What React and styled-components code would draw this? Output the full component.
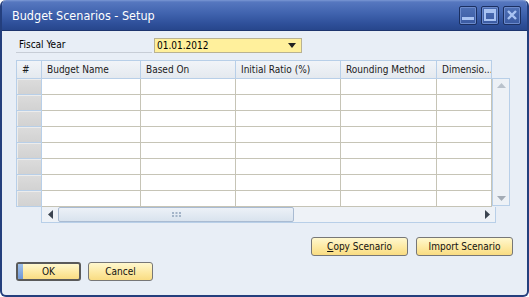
import React from "react";
import styled, { createGlobalStyle } from "styled-components";

const Global = createGlobalStyle`
  html, body { margin: 0; padding: 0; background: #ffffff; }
  body { font-family: "DejaVu Sans Condensed", "DejaVu Sans", sans-serif; }
`;

const FONT = `"DejaVu Sans Condensed", "DejaVu Sans", sans-serif`;

const Window = styled.div`
  box-sizing: border-box;
  width: 529px;
  height: 297px;
  display: flex;
  flex-direction: column;
  background: #e8eef6;
  border: 2px solid #243f7d;
  border-top: none;
  border-radius: 6px;
  overflow: hidden;
`;

const TitleBar = styled.div`
  height: 30px;
  flex: none;
  display: flex;
  align-items: center;
  justify-content: space-between;
  padding: 0 8px 0 12px;
  margin: 0 -2px;
  background: linear-gradient(#7a97d4 0px, #5677bf 2px, #3f62ad 14px, #2e4f99 24px, #27468c 30px);
  border-bottom: 1px solid #1d356e;
`;

const Title = styled.span`
  color: #ffffff;
  font-family: ${FONT};
  font-size: 12.5px;
  margin-top: 1px;
`;

const Controls = styled.div`
  display: flex;
  gap: 4px;
`;

const CtrlBtn = styled.div`
  box-sizing: border-box;
  width: 18px;
  height: 19px;
  border: 1px solid #1b2f60;
  border-radius: 2px;
  background: linear-gradient(#4e70b6, #3a5aa2);
  box-shadow: inset 0 0 0 1px #6c8acb;
  display: flex;
  align-items: center;
  justify-content: center;
`;

const Body = styled.div`
  flex: 1;
  display: flex;
  flex-direction: column;
  padding: 7px 14px 0 14px;
  font-family: ${FONT};
  font-size: 10px;
  color: #000;
`;

const FieldRow = styled.div`
  display: flex;
  align-items: center;
  height: 15px;
`;

const Label = styled.div`
  width: 136px;
  height: 15px;
  box-sizing: border-box;
  padding-left: 3px;
  border-bottom: 1px solid #c7cdd6;
  line-height: 14px;
  margin-right: 2px;
`;

const Select = styled.div`
  box-sizing: border-box;
  width: 148px;
  height: 15px;
  background: #fff09c;
  border: 1px solid #b9b292;
  display: flex;
  align-items: center;
  justify-content: space-between;
  padding: 0 5px 0 2px;
`;

const GridWrap = styled.div`
  margin-top: 7px;
  display: flex;
  flex-direction: column;
  width: 498px;
`;

const GridTop = styled.div`
  display: flex;
  align-items: flex-start;
`;

const Table = styled.div`
  display: grid;
  grid-template-columns: 25px 99px 95px 105px 96px 55px;
  border-left: 1px solid #b8cfe8;
  border-top: 1px solid #b8cfe8;
`;

const HeadCell = styled.div`
  box-sizing: border-box;
  height: 18px;
  background: linear-gradient(#f1f4f8, #e4e9ef);
  border-right: 1px solid #b8cfe8;
  border-bottom: 1px solid #b8cfe8;
  padding-left: 5px;
  line-height: 17px;
  white-space: nowrap;
  overflow: hidden;
  color: #1a1a1a;
`;

const RowHead = styled.div`
  box-sizing: border-box;
  height: 16px;
  background: linear-gradient(#dcdcdc, #d2d2d2);
  border-right: 1px solid #b8cfe8;
  border-bottom: 1px solid #b8cfe8;
  box-shadow: inset 1px 1px 0 #ececec;
`;

const Cell = styled.div`
  box-sizing: border-box;
  height: 16px;
  background: #ffffff;
  border-right: 1px solid #c6c4b6;
  border-bottom: 1px solid #c6c4b6;
`;

const VScroll = styled.div`
  box-sizing: border-box;
  margin-top: 18px;
  width: 18px;
  height: 128px;
  background: #edf1f6;
  border: 1px solid #b8cfe8;
  display: flex;
  flex-direction: column;
  justify-content: space-between;
  align-items: center;
  padding: 4px 0;
`;

const HScroll = styled.div`
  box-sizing: border-box;
  margin-left: 25px;
  width: 455px;
  height: 16px;
  background: #eef2f7;
  border: 1px solid #b8cfe8;
  border-top: none;
  display: flex;
  align-items: center;
`;

const ArrowBtn = styled.div`
  width: 16px;
  height: 15px;
  display: flex;
  align-items: center;
  justify-content: center;
  flex: none;
`;

const Thumb = styled.div`
  box-sizing: border-box;
  width: 236px;
  height: 15px;
  border: 1px solid #a9bbd2;
  border-radius: 2px;
  background: linear-gradient(#ecf1f7, #d9e3ee);
  display: flex;
  align-items: center;
  justify-content: center;
`;

const Spacer = styled.div`
  flex: 1;
`;

const ActionRow = styled.div`
  display: flex;
  justify-content: flex-end;
  gap: 8px;
  margin-top: 14px;
  width: 497px;
`;

const BottomRow = styled.div`
  display: flex;
  gap: 7px;
  margin-top: 6px;
`;

const Button = styled.button`
  box-sizing: border-box;
  width: ${(p) => p.$w}px;
  height: 19px;
  padding: 0;
  font-family: ${FONT};
  font-size: 10px;
  color: #111;
  background: linear-gradient(#fff8cf, #fde9a2 55%, #f9dc82);
  border: ${(p) => (p.$default ? "2px solid #5a5a5a" : "1px solid #777")};
  border-radius: 3px;
  position: relative;
  overflow: hidden;
  ${(p) =>
    p.$default &&
    `&::before { content: ""; position: absolute; left: 0; top: 0; bottom: 0; width: 5px; background: linear-gradient(#9fc0ea, #6f97d6); }`}
`;

const U = styled.span`
  text-decoration: underline;
`;

const cols = ["Budget Name", "Based On", "Initial Ratio (%)", "Rounding Method", "Dimensio..."];

export default function App() {
  const rows = Array.from({ length: 8 });
  return (
    <>
      <Global />
      <Window>
        <TitleBar>
          <Title>Budget Scenarios - Setup</Title>
          <Controls>
            <CtrlBtn>
              <svg width="12" height="12" viewBox="0 0 12 12">
                <rect x="0" y="8" width="12" height="3" fill="#a9c3f2" />
              </svg>
            </CtrlBtn>
            <CtrlBtn>
              <svg width="12" height="12" viewBox="0 0 12 12">
                <rect x="1" y="1" width="10" height="10" fill="none" stroke="#a9c3f2" strokeWidth="2" />
                <rect x="1" y="1" width="10" height="3" fill="#a9c3f2" />
              </svg>
            </CtrlBtn>
            <CtrlBtn>
              <svg width="12" height="12" viewBox="0 0 12 12">
                <path d="M2 2 L10 10 M10 2 L2 10" stroke="#a9c3f2" strokeWidth="2.4" />
              </svg>
            </CtrlBtn>
          </Controls>
        </TitleBar>
        <Body>
          <FieldRow>
            <Label>Fiscal Year</Label>
            <Select>
              <span>01.01.2012</span>
              <svg width="8" height="5" viewBox="0 0 8 5">
                <path d="M0 0 H8 L4 5 Z" fill="#222" />
              </svg>
            </Select>
          </FieldRow>
          <GridWrap>
            <GridTop>
              <Table>
                <HeadCell>#</HeadCell>
                {cols.map((c) => (
                  <HeadCell key={c}>{c}</HeadCell>
                ))}
                {rows.map((_, i) => (
                  <React.Fragment key={i}>
                    <RowHead />
                    {cols.map((c) => (
                      <Cell key={c} />
                    ))}
                  </React.Fragment>
                ))}
              </Table>
              <VScroll>
                <svg width="9" height="5" viewBox="0 0 9 5">
                  <path d="M0 5 L4.5 0 L9 5 Z" fill="#b9c2cc" />
                </svg>
                <svg width="9" height="5" viewBox="0 0 9 5">
                  <path d="M0 0 L9 0 L4.5 5 Z" fill="#a3abb5" />
                </svg>
              </VScroll>
            </GridTop>
            <HScroll>
              <ArrowBtn>
                <svg width="5" height="9" viewBox="0 0 5 9">
                  <path d="M5 0 L0 4.5 L5 9 Z" fill="#3b4450" />
                </svg>
              </ArrowBtn>
              <Thumb>
                <svg width="9" height="5" viewBox="0 0 9 5">
                  <g fill="#a3b4c8">
                    <rect x="0" y="0" width="2" height="2" />
                    <rect x="3.5" y="0" width="2" height="2" />
                    <rect x="7" y="0" width="2" height="2" />
                    <rect x="0" y="3" width="2" height="2" />
                    <rect x="3.5" y="3" width="2" height="2" />
                    <rect x="7" y="3" width="2" height="2" />
                  </g>
                </svg>
              </Thumb>
              <Spacer />
              <ArrowBtn>
                <svg width="5" height="9" viewBox="0 0 5 9">
                  <path d="M0 0 L5 4.5 L0 9 Z" fill="#3b4450" />
                </svg>
              </ArrowBtn>
            </HScroll>
          </GridWrap>
          <ActionRow>
            <Button $w={97}>
              <U>C</U>opy Scenario
            </Button>
            <Button $w={97}>Import Scenario</Button>
          </ActionRow>
          <BottomRow>
            <Button $w={65} $default>
              OK
            </Button>
            <Button $w={65}>Cancel</Button>
          </BottomRow>
        </Body>
      </Window>
    </>
  );
}
